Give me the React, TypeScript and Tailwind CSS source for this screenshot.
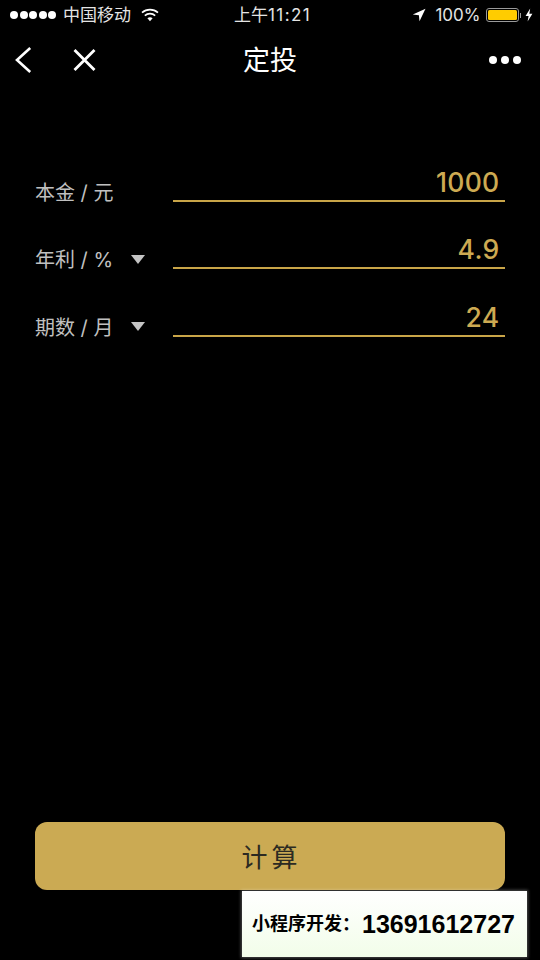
const SANS = "font-['Inter','Noto_Sans_CJK_SC',sans-serif]";

const rows = [
  { label: "本金 / 元", value: "1000", picker: false },
  { label: "年利 / %", value: "4.9", picker: true },
  { label: "期数 / 月", value: "24", picker: true },
];

function StatusBar() {
  return (
    <div className="relative flex h-[30px] items-center justify-between pl-[10px] pr-[7px] text-[17px] text-[#e4e4e4]">
      <div className="flex items-center">
        <div className="flex gap-[1.5px]">
          {[0, 1, 2, 3, 4].map((i) => (
            <span key={i} className="h-[8px] w-[8px] rounded-full bg-white" />
          ))}
        </div>
        <span className="ml-[7px] leading-none">中国移动</span>
        <svg className="ml-[10px]" width="18" height="14" viewBox="0 0 18 14" fill="none">
          <path d="M1 4.6 C5.6 .6 12.4 .6 17 4.6" stroke="#fff" strokeWidth="1.7" />
          <path d="M3.8 7.6 C6.8 5 11.2 5 14.2 7.6" stroke="#fff" strokeWidth="1.7" />
          <path d="M6.4 10.3 C8 9 10 9 11.6 10.3 L9 13.2 Z" fill="#fff" />
        </svg>
      </div>
      <span className="absolute left-[234px] top-[5px] leading-[20px]">
        上午<span className="tracking-[1.4px]">11:21</span>
      </span>
      <div className="flex items-center">
        <svg width="14" height="14" viewBox="0 0 14 14">
          <path d="M13.5 .8 L.8 6.6 L6.9 7.2 L7.5 13.2 Z" fill="#fff" />
        </svg>
        <span className="ml-[9px] leading-none">100%</span>
        <div className="ml-[5px] flex items-center">
          <div className="h-[14px] w-[33px] rounded-[3px] border border-[#9a9a9a] p-[1px]">
            <div className="h-full w-full rounded-[1.5px] bg-[#ffcc00]" />
          </div>
          <span className="ml-[1px] h-[5px] w-[1.5px] bg-[#9a9a9a]" />
        </div>
        <svg className="ml-[4px]" width="8" height="14" viewBox="0 0 8 14">
          <path d="M5.2 .5 L.6 8 H3.6 L2.6 13.5 L7.4 5.8 H4.3 Z" fill="#fff" />
        </svg>
      </div>
    </div>
  );
}

function NavBar() {
  return (
    <div className="relative flex h-[60px] items-center justify-between pl-[15px] pr-[19px]">
      <div className="flex items-center gap-[41px]">
        <svg width="17" height="28" viewBox="0 0 17 28" fill="none">
          <path d="M15.2 2 L2 14 L15.2 26" stroke="#fff" strokeWidth="2.6" />
        </svg>
        <svg width="23" height="22" viewBox="0 0 23 22" fill="none">
          <path d="M1.5 1 L21.5 21 M21.5 1 L1.5 21" stroke="#fff" strokeWidth="2.8" />
        </svg>
      </div>
      <span className="absolute left-0 right-0 top-[17px] text-center text-[27px] font-normal leading-none text-white">定投</span>
      <div className="flex gap-[4px]">
        <span className="h-[8px] w-[8px] rounded-full bg-white" />
        <span className="h-[8px] w-[8px] rounded-full bg-white" />
        <span className="h-[8px] w-[8px] rounded-full bg-white" />
      </div>
    </div>
  );
}

export default function App() {
  return (
    <div className={`relative flex h-[960px] w-[540px] flex-col overflow-hidden bg-black ${SANS}`}>
      <StatusBar />
      <NavBar />
      <div className="mt-[44px] px-[35px]">
        {rows.map((row) => (
          <div key={row.label} className="flex h-[67.5px] items-end">
            <div className="flex w-[138px] items-center">
              <span className="relative top-[5px] w-[96px] text-[20px] leading-[28px] text-[#c0c0c0]">{row.label}</span>
              {row.picker && (
                <span className="relative top-[4px] h-0 w-0 border-x-[7.5px] border-t-[9px] border-x-transparent border-t-[#c4c4c4]" />
              )}
            </div>
            <div className="flex h-[40px] flex-1 items-start justify-end border-b-2 border-[#c9a548] pr-[5.5px]">
              <span className="relative top-[2px] text-[26.5px] font-medium leading-[36px] tracking-[0.3px] text-[#cdaa52]">{row.value}</span>
            </div>
          </div>
        ))}
      </div>
      <div className="mt-auto mb-[70px] px-[35px]">
        <button className="flex h-[68px] w-full items-center justify-center rounded-[12px] bg-[#cbaa53] pl-[3px] pt-[3px] text-[26px] font-normal tracking-[4px] text-[#2c2a22]">
          计算
        </button>
      </div>
      <div className="absolute left-[242px] top-[891px] flex h-[66px] w-[285px] items-center bg-gradient-to-b from-white to-[#f2fde9] pl-[10px] shadow-[0_0_3px_1px_rgba(255,255,255,0.3)] font-['Liberation_Sans','Noto_Sans_CJK_SC',sans-serif]">
        <span className="w-[110px] text-[18px] font-bold text-black">小程序开发：</span>
        <span className="text-[25px] font-bold leading-none text-black">13691612727</span>
      </div>
    </div>
  );
}
